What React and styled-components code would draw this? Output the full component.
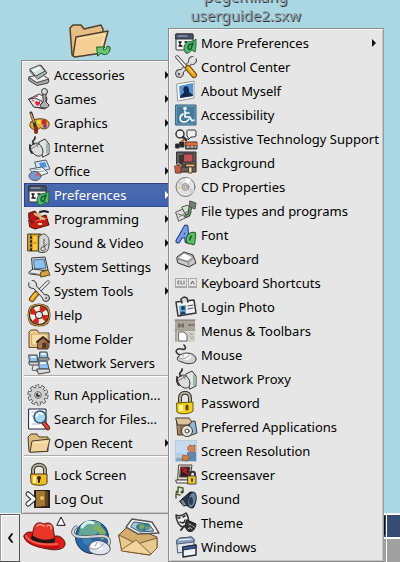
import React from 'react';
import styled, { createGlobalStyle } from 'styled-components';

const GlobalStyle = createGlobalStyle`
  * { box-sizing: border-box; }
  body { margin: 0; background: #abd7e3; font-family: "Noto Sans", "Open Sans", sans-serif; font-size: 13px; color: #000; }
  button { font: inherit; color: inherit; }
`;

const Desktop = styled.div`
  position: relative;
  display: flex;
  flex-direction: column;
  justify-content: flex-end;
  min-height: 100vh;
  overflow: hidden;
`;

const FolderShortcut = styled.button`
  position: absolute;
  left: 68px;
  top: 22px;
  padding: 0;
  border: 0;
  background: none;
  line-height: 0;
`;

const FileLabel = styled.div`
  position: absolute;
  left: 168px;
  top: -13px;
  width: 155px;
  text-align: center;
  font-size: 15px;
  line-height: 19px;
  color: #94a3a9;
  text-shadow: 1px 1px 0 #30383c;
`;

const Menu = styled.nav`
  position: absolute;
  left: ${p => (p.$sub ? 168 : 21)}px;
  bottom: ${p => (p.$sub ? 0 : 48)}px;
  width: ${p => (p.$sub ? 216 : 156)}px;
  padding: 2px;
  background: #e6e6e6;
  border: 1px solid #8c8c8c;
  border-right-color: #999;
  box-shadow: inset 1px 1px 0 #f6f6f6, inset -1px -1px 0 #c6c6c6;
`;

const MenuItem = styled.button`
  display: flex;
  align-items: center;
  gap: 4px;
  width: 100%;
  height: 24px;
  padding: 0 4px;
  border: 0;
  text-align: left;
  white-space: nowrap;
  color: ${p => (p.$active ? '#fff' : '#000')};
  background: ${p => (p.$active ? 'linear-gradient(#4a69ae, #4666b0 60%, #3f5fae)' : 'transparent')};
  box-shadow: ${p => (p.$active ? 'inset 0 1px 0 #2f447c, inset 1px 0 0 #2f447c, inset 0 -1px 0 #35509a' : 'none')};
`;

const MenuLabel = styled.span`
  flex: 1;
  line-height: 20px;
`;

const Separator = styled.hr`
  height: 2px;
  margin: 0 0 6px;
  border: 0;
  border-top: 1px solid #ababab;
  border-bottom: 1px solid #fff;
`;

const Icon = styled.svg`
  flex: none;
  width: ${p => p.$w || 22}px;
  height: ${p => p.$h || p.$w || 22}px;
  overflow: visible;
  stroke-linejoin: round;
  stroke-linecap: round;
`;

const Panel = styled.footer`
  display: flex;
  height: 49px;
  background: #e6e6e6;
  border-top: 1px solid #f4f4f4;
`;

const HideButton = styled.button`
  display: grid;
  place-items: center;
  width: 20px;
  padding: 0;
  background: #e8e8e8;
  border: 1px solid #555;
  border-left-color: #999;
  box-shadow: inset 1px 1px 0 #fff;
`;

const Launchers = styled.div`
  display: flex;
  align-items: center;
  gap: 4px;
  flex: 1;
  padding-left: 2px;
`;

const Launcher = styled.button`
  display: grid;
  place-items: center;
  width: 44px;
  height: 46px;
  padding: 0;
  border: 0;
  background: none;
`;

const Pager = styled.div`
  display: grid;
  grid-template: 22px 1fr / 27px 13px;
  gap: 2px 1px;
  padding-top: 1px;
  background: #fff;
`;

const Workspace = styled.div`
  padding: 1px 1px 2px 0;
  background: ${p => (p.$current ? '#384b73' : '#a0a0a0')};
`;

const MiniWindow = styled.div`
  height: 19px;
  background: #e6e6e6;
  border: 1px solid #111;
`;

const K = '#333';

const art = {
  accessories: <g stroke="#444">
    <path d="M1 14l12-2 8 4-1 3-11 2.500-8-5z" fill="#aaa" /><path d="M1 13l12-3 8 5-12 3.500z" fill="#e8eceb" />
    <path d="M2 7l11-6 6 8-9 6z" fill="#a5b5af" /><path d="M2 5l10-4 5 6-9 5z" fill="#cfe3d8" /><path d="M4 6l7-3 2 2-7 3z" fill="#f5fff9" stroke="none" />
  </g>,
  games: <g stroke={K}>
    <path d="M1 11l10-5 8 4-2 11-10-2z" fill="#fff" /><path d="M1 11l6-1 7 3 1 7-9-1z" fill="#e9dcdc" />
    <path d="M8 13l2 1 2-1 0 3-3 2-2-3z" fill="#dc2638" stroke="none" /><path d="M4 12l2 1M6 9l4-1" stroke="#d34" />
    <path d="M15 5l3 0 0 9 3 3c0 4-9 4-9 0l3-3z" fill="#b0b0b0" /><circle cx="16.500" cy="3.500" r="3" fill="#ddd" />
  </g>,
  graphics: <g stroke="#5a3c14">
    <path d="M3 10c4-5 17-4 18 1 1 6-5 7-8 5-2-1-2 3-6 2-4-1-7-4-4-8z" fill="#e7ae3a" />
    <circle cx="16" cy="10" r="2.600" fill="#c52b20" stroke="none" /><circle cx="17" cy="14" r="2" fill="#7b3ea3" stroke="none" /><circle cx="11" cy="10" r="2" fill="#e9dd34" stroke="none" /><circle cx="7" cy="14" r="2" fill="#5a9a35" stroke="none" />
    <path d="M3 1l3 9 2 7" fill="none" stroke="#333" strokeWidth="3" /><path d="M3 2l3 8" stroke="#d9a252" strokeWidth="1.500" /><path d="M8 16l0 4" stroke="#8e2c17" strokeWidth="4" />
  </g>,
  internet: <g stroke={K}>
    <path d="M11 6l6-3 4 5v10l-6 3z" fill="#dce7e1" /><path d="M18 6l3 3v8l-3 1z" fill="#9fb5ab" stroke="none" />
    <path d="M4 9c5-5 10 0 11 6 0 7-7 6-10 2S1 12 4 9z" fill="#ddd" /><path d="M3 13l8-5M8 7l2 4" fill="none" stroke="#777" /><path d="M6 8C2 5 8 4 7 1M2 9c0 3-1 5 2 8" fill="none" strokeWidth="1.800" />
  </g>,
  office: <g stroke="#4b5d6b">
    <path d="M7 2l11-2 4 9-12 3z" fill="#cfe2f7" /><path d="M11 3l6-1 2 5-6 1z" fill="#5193dd" stroke="none" />
    <path d="M2 9l12-2 6 6-11 4z" fill="#fff" /><path d="M5 10l8-1M7 12l9-1" stroke="#8ab" /><ellipse cx="7" cy="16" rx="6" ry="4.500" fill="#7799d0" /><path d="M7 16l6-1-3-3z" fill="#d35545" stroke="none" />
  </g>,
  preferences: <g stroke="#333">
    <rect x="1" y="2" width="17" height="16" rx="1" fill="#f5f5f5" /><path d="M1 2h17v5H1z" fill="#46536e" /><path d="M3 4h9" stroke="#aeb9ce" />
    <path d="M4 10h2M4 14h3M5 10v4M10 10h2" stroke="#111" strokeWidth="1.500" />
    <path d="M11 21c-3-2-3-9 2-11 3-1 5 0 8-3 0 5 0 10-1 13l-3-2c-2 2-4 4-6 3z" fill="#50b86a" stroke="#226337" /><path d="M17 12c-5 0-5 7-1 5l2-6" fill="none" stroke="#16592b" strokeWidth="1.500" />
  </g>,
  programming: <g stroke="#4b1510">
    <path d="M1 12l17-5 3 10-14 4-5-2z" fill="#c51c13" /><path d="M1 5l6-2 4 6-7 6-3-4z" fill="#b61812" /><path d="M7 13l13-3" stroke="#f36349" />
    <path d="M11 5l2 6M7 6l9 5" stroke="#d8b780" strokeWidth="2.400" /><path d="M12 4l4-1 4 1" fill="none" stroke="#222" strokeWidth="2" /><path d="M10 15h4v2h-4z" fill="#f3d4a0" stroke="none" />
  </g>,
  media: <g stroke="#54431e">
    <path d="M0 2h13v17H0z" fill="#dda120" /><path d="M3 2v17M11 2v17" stroke="#222" strokeWidth="2" strokeLinecap="butt" /><path d="M3 3v16M11 3v16" stroke="#fff2bf" strokeDasharray="1 3" /><path d="M5 4h4v6H5zM5 12h4v6H5z" fill="#ffc53e" stroke="none" />
    <path d="M11 5c5-7 11-1 10 7 0 7-3 10-10 8z" fill="#d6d6d0" stroke="#444" /><path d="M16 7v8c-4-1-4 4-1 4 3 0 3-3 1-4l3-3" fill="none" stroke="#555" />
  </g>,
  settings: <g stroke={K}>
    <path d="M4 2l13-1 3 13-15 1z" fill="#e0e5e7" /><path d="M6 4l10-1 2 9-11 1z" fill="#8cc2f0" stroke="#456b8d" /><path d="M1 16l4-3 15 2-2 5-16-2z" fill="#e6e6e6" /><path d="M3 17l12 2" stroke="#777" /><path d="M13 16l7-2 2 5-9 2z" fill="#d5a33a" stroke="#665020" />
  </g>,
  tools: <g>
    <path d="M20 2L8 14" stroke="#444" strokeWidth="3.500" /><path d="M20 2L8 14" stroke="#eee" strokeWidth="2" /><path d="M8 14l-4 5" stroke="#5c3b05" strokeWidth="6" /><path d="M8 14l-4 5" stroke="#eba823" strokeWidth="4" /><path d="M7 14l-3 4" stroke="#ffe277" />
    <path d="M6 6l11 12" stroke="#333" strokeWidth="4.500" /><circle cx="4.500" cy="4.500" r="4" fill="#ddd" stroke="#333" /><circle cx="18" cy="18" r="3.500" fill="#ccc" stroke="#333" /><path d="M6 6l11 12" stroke="#e0e0e0" strokeWidth="3" /><path d="M2 1l3 3" stroke="#e6e6e6" strokeWidth="3" /><circle cx="18" cy="18" r="1" fill="#555" />
  </g>,
  control: <g>
    <path d="M5 17L17 5" stroke="#333" strokeWidth="4.500" /><circle cx="17.500" cy="4.500" r="4" fill="#ddd" stroke="#333" /><circle cx="4.500" cy="17.500" r="4" fill="#ccc" stroke="#333" /><path d="M5 17L17 5" stroke="#ddd" strokeWidth="3" /><path d="M20 1l-3 3" stroke="#e6e6e6" strokeWidth="3" /><circle cx="4" cy="18" r="1.200" fill="#555" />
    <path d="M2 1l10 11" stroke="#333" strokeWidth="3.500" /><path d="M2 1l10 11" stroke="#eee" strokeWidth="2" /><path d="M13 12l6 7" stroke="#6d4608" strokeWidth="6" /><path d="M13 12l6 7" stroke="#efa81d" strokeWidth="4" /><path d="M14 12l4 5" stroke="#ffe17a" />
  </g>,
  help: <g>
    <path d="M3 3c4-3 12-3 16 0 3 4 3 12 0 16-4 3-12 3-16 0C0 15 0 7 3 3z" fill="none" stroke="#5f3b17" strokeWidth="2.500" /><path d="M3 3c4-3 12-3 16 0 3 4 3 12 0 16-4 3-12 3-16 0C0 15 0 7 3 3z" fill="none" stroke="#e1bd58" /><circle cx="11" cy="11" r="6.500" fill="none" stroke="#321" strokeWidth="7" /><circle cx="11" cy="11" r="6.500" fill="none" stroke="#f4eee5" strokeWidth="5" /><circle cx="11" cy="11" r="6.500" fill="none" stroke="#d42418" strokeWidth="5" strokeDasharray="5.100 5.100" strokeLinecap="butt" />
  </g>,
  home: <g stroke="#5b4323"><path d="M1 19V4l2-2h6l2 3h10v14z" fill="#f3d08d" /><path d="M4 6h15v11H4z" fill="#f9deaa" stroke="#d0a665" /><path d="M10 14l5-5 5 5v7H10z" fill="#a8754e" stroke="#4a3020" /><path d="M9 14l6-5 6 5" fill="none" stroke="#3b2a1e" strokeWidth="2" /><path d="M15 15h3v5h-3z" fill="#553219" /></g>,
  network: <g stroke="#444"><path d="M1 3h8l1 7H2zM12 0h7l1 6h-8zM10 9h9l2 8H12z" fill="#8bc1ec" /><path d="M1 10l10 0 0 3-9 0zM10 6h11v2H11zM9 17l12 0 1 3-11 2z" fill="#dadada" /><path d="M4 5h3M14 2h3M13 11h4" stroke="#e8f6ff" strokeWidth="2" /><path d="M5 14l-1 4 6 1" fill="none" stroke="#555" /></g>,
  gear: <g><circle cx="10" cy="11" r="8.500" fill="none" stroke="#444" strokeWidth="4" strokeDasharray="3.500 1.840" strokeLinecap="butt" /><circle cx="10" cy="11" r="8" fill="#cacac6" stroke="#555" /><circle cx="10" cy="11" r="8.500" fill="none" stroke="#ddd" strokeWidth="2.500" strokeDasharray="2.500 2.840" strokeDashoffset="-0.500" strokeLinecap="butt" /><circle cx="10" cy="11" r="6" fill="#d5d5d1" /><circle cx="10" cy="11" r="3.500" fill="#bbb" stroke="#777" /><circle cx="10" cy="11" r="2" fill="#333" /><circle cx="11" cy="10" r="1" fill="#eee" /></g>,
  search: <g><path d="M1 1h17v20H1z" fill="#fff" stroke="#172347" /><path d="M4 4h3M4 8h2M4 16h7" stroke="#aab7cf" /><path d="M15 14l5 6" stroke="#6b1814" strokeWidth="4.500" /><path d="M15 14l5 6" stroke="#de4b3f" strokeWidth="2.500" /><circle cx="12" cy="9" r="6" fill="#a6d8f2" stroke="#31526b" strokeWidth="1.500" /><path d="M9 8c0-3 3-4 5-2" fill="none" stroke="#fff" strokeWidth="2" /></g>,
  folder: <g stroke="#4a3a25"><path d="M1 19L0 5l3-3h6l2 3h9v14z" fill="#e0bb80" /><path d="M2 20L4 9l18-2-3 12z" fill="#f2d49d" /><path d="M5 11l14-1" stroke="#ffedc7" /></g>,
  lock: <g stroke="#493814"><path d="M5 11V6c0-7 12-7 12 0v5" fill="none" strokeWidth="4" /><path d="M5 11V6c0-7 12-7 12 0v5" fill="none" stroke="#aaa" strokeWidth="2" /><path d="M3 10h16v9c0 3-16 3-16 0z" fill="#f1bd20" /><path d="M5 12h3v7H5z" fill="#ffeb85" stroke="none" /><circle cx="11" cy="14" r="2" fill="#2d2511" stroke="none" /><path d="M11 14v4" stroke="#2d2511" strokeWidth="2" /></g>,
  password: <g stroke="#6a560e"><path d="M5 11V6c0-7 10-7 10 0v5" fill="none" stroke="#333" strokeWidth="4" /><path d="M5 11V6c0-7 10-7 10 0v5" fill="none" stroke="#b6b394" strokeWidth="2" /><path d="M2 11l16-1v9c-2 3-14 4-16 1z" fill="#f0d41c" /><path d="M4 13h4v6H4z" fill="#fff69a" stroke="none" /><path d="M12 14v3" stroke="#6b3c0d" strokeWidth="3" /></g>,
  logout: <g><path d="M6 2h16v18H6z" fill="#29221c" /><path d="M8 3h9v15l-9 1z" fill="#a37834" /><path d="M17 3l3 1v14h-3z" fill="#60451f" /><circle cx="14" cy="10" r="2" fill="#eec463" /><path d="M0 6l6 5-6 5" fill="none" stroke="#222" strokeWidth="5" /><path d="M0 6l6 5-6 5" fill="none" stroke="#fff" strokeWidth="3" /></g>,
  person: <g><path d="M2 4l17-3v17L3 21z" fill="#f8fafb" stroke="#999" /><path d="M4 6l14-3v13L5 18z" fill="#5792d7" /><path d="M5 18c0-4 4-4 4-6-3-7 6-8 5-1 0 3 4 2 4 5z" fill="#12294d" /></g>,
  access: <g><path d="M1 1h20v20H1z" fill="#447a9c" stroke="#315c78" /><path d="M2 2h18v18H2z" fill="none" stroke="#6f9fb9" /><circle cx="10" cy="4.500" r="1.800" fill="#fff" /><path d="M10 7v6h5l2 4 2-1M10 9h4M8 10c-4 2-4 8 1 8 3 0 4-1 5-3" fill="none" stroke="#fff" strokeWidth="1.600" /></g>,
  assist: <g stroke={K}><circle cx="5" cy="6" r="4" fill="#eef1f2" strokeWidth="1.500" /><path d="M8 9l3 3" strokeWidth="2.500" /><path d="M13 2h7l1 1v5l-2 1h-3l-3 3V9l-1-1V3z" fill="#eee" /><path d="M1 16h3v4H1zM5 14h4v5H5z" fill="#252525" /><path d="M7 13l2-1" stroke="#d55b30" strokeWidth="2" /><path d="M11 14h11v7H11z" fill="#555" /><path d="M12 16h9" stroke="#e56a34" strokeWidth="3" /><path d="M12 19h2M16 19h2M20 19h1" stroke="#fff" /></g>,
  background: <g><path d="M2 0h19v20H2z" fill="#64605e" stroke="#292624" /><path d="M9 2h9v8H9z" fill="#c45356" stroke="#392a2a" /><path d="M4 3h4v9H4z" fill="#383637" /><path d="M5 12h12v4H5z" fill="#45474b" /><path d="M0 14l6-1v8H1z" fill="#c45d3d" stroke="#653228" /><path d="M1 14c0-3 5-3 5 0" fill="none" stroke="#d5c5b4" /><path d="M11 12h9v3h-9z" fill="#e1b770" stroke="#3d2a19" /><path d="M14 15h3v6h-3z" fill="#efdcad" stroke="#583e27" /></g>,
  cd: <g><circle cx="10.500" cy="11" r="9.500" fill="#e4e4df" stroke="#777" /><path d="M10 11L5 4l-2 4zM11 11l6 7 3-4z" fill="#d8ccd7" /><path d="M10 11L2 10v4z" fill="#dcdcab" /><path d="M11 11l5-8-5-1z" fill="#fafafa" /><circle cx="10.500" cy="11" r="3.500" fill="#ccc" stroke="#999" /><circle cx="10.500" cy="11" r="1.500" fill="#f8f8f8" stroke="#888" /></g>,
  filetypes: <g stroke="#555"><path d="M1 12l7-3 4 8-8 4z" fill="#dfe2dd" /><path d="M3 14l6 2M4 17l5-3" stroke="#777" /><path d="M7 7l6-2 3 5-6 3z" fill="#d1e1cf" /><path d="M11 16c7-1 1-8 6-10" fill="none" stroke="#333" strokeWidth="3.500" /><path d="M11 16c7-1 1-8 6-10" fill="none" stroke="#64a65d" strokeWidth="1.800" /><path d="M15 1l6 2-1 6-5-2z" fill="#708071" /></g>,
  font: <g><path d="M3 17L11 3l1 14M6 12h7" fill="none" stroke="#223b78" strokeWidth="5" /><path d="M3 17L11 3l1 14M6 12h7" fill="none" stroke="#779cef" strokeWidth="3" /><path d="M19 10c-7-1-8 10-3 8l3-7-1 8" fill="none" stroke="#205c2a" strokeWidth="4.500" /><path d="M19 10c-7-1-8 10-3 8l3-7-1 8" fill="none" stroke="#5dbf64" strokeWidth="2.500" /></g>,
  keyboard: <g stroke={K}><path d="M2 9l7-5 9 3 3 8-7 4-11-4z" fill="#c8c8c5" /><path d="M3 10l6-5 9 4-5 4z" fill="#fff" stroke="#999" /><path d="M3 11l10 3 6-4M13 14l1 5" fill="none" stroke="#888" /></g>,
  shortcuts: <g><path d="M0 6h12v10H0zM13 6h9v10h-9z" fill="#aaa" /><path d="M1 7h10v7H1zM14 7h7v7h-7z" fill="#e6e6e6" /><path d="M4 9H3v3h1M6 9v3h1M9 9v3" fill="none" stroke="#666" /><path d="M16 12l1.500-3 1.500 3" fill="none" stroke="#555" /></g>,
  badge: <g stroke="#333"><path d="M1 6l18-2 2 13-18 3z" fill="#eef4f7" strokeWidth="1.500" /><path d="M7 7l-1-4 3-2 3 1 1 4" fill="#ddd" strokeWidth="1.500" /><path d="M4 10l7-1v9l-6 1z" fill="#68a5cf" stroke="none" /><circle cx="8" cy="12" r="2" fill="#253d58" stroke="none" /><path d="M5 19c0-5 5-4 6-1z" fill="#253d58" stroke="none" /><path d="M13 10l5-1M13 13l5-1" stroke="#555" /></g>,
  toolbar: <g><path d="M0 0h20v22H0z" fill="#d2d0c7" /><path d="M0 0h20v9H0z" fill="#aaa69b" /><path d="M0 0h20M0 10h20" stroke="#77736a" /><path d="M4 4v3M6 5v1M8 4v3M14 5h2M18 5h1" stroke="#625e56" strokeWidth="1.500" /><path d="M1 11v10" stroke="#7a776e" /><path d="M4 12h5l3 3v6H4z" fill="#fff" stroke="#68655e" /><path d="M14 14h4M15 16l2 3 2-3" fill="none" stroke="#aaa69b" /></g>,
  mouse: <g stroke={K}><path d="M5 11C-2 8 2 4 6 5c4 1 6 0 3-4" fill="none" strokeWidth="1.600" /><path d="M3 13c4-6 16-5 18 1 1 6-8 7-14 4-4-1-6-2-4-5z" fill="#d4d4d4" /><path d="M5 12c5-4 10-2 12 1-3 4-8 4-12 1z" fill="#fafafa" stroke="none" /><path d="M8 9v4M4 14c5 2 8 0 10-3" fill="none" stroke="#999" /></g>,
  preferred: <g stroke="#44392d"><path d="M12 6l8-1 2 12-8 3z" fill="#8cb7dc" /><path d="M2 4h13l-1 15H3z" fill="#ad8059" /><path d="M1 2h13l3 4-4 3H3z" fill="#dbc29d" /><path d="M6 10v8" stroke="#7d5133" /><circle cx="12" cy="15" r="5.500" fill="#e3e7e6" /><circle cx="12" cy="15" r="2" fill="#fff" /></g>,
  resolution: <g><path d="M0 0h22v22H0z" fill="#b8cce0" /><path d="M1 1h20v12H1z" fill="#c5dbed" /><path d="M12 12h9v9h-9z" fill="#5c88b9" /><path d="M1 18h12v3H1z" fill="#86a8c7" /><path d="M11 18l-5-1 1-5 3 1 2-1 2 3-2 1z" fill="#cc8452" stroke="#a06139" transform="translate(1 3)" /><path d="M13 7l2-2 2 1 3-1v6l-3 2-4-3z" fill="#d08458" stroke="#a86a48" /></g>,
  screensaver: <g stroke="#4b4643"><path d="M4 1h13l-2 15H3z" fill="#f3ded4" /><path d="M6 3h9l-1 10H5z" fill="#311d21" /><path d="M7 4l5 2-4 1 5 3" fill="none" stroke="#b31e24" strokeWidth="2" /><path d="M1 16h12l1 3H2z" fill="#eee" /><path d="M15 13v-3c0-3 5-3 5 0v3" fill="none" stroke="#333" strokeWidth="2" /><path d="M13 12h8v8h-8z" fill="#efcb27" /><path d="M17 15v2" strokeWidth="2" /></g>,
  sound: <g><path d="M3 4V-1l5 1v4M1 10V6l4 1" fill="none" stroke="#53612a" strokeWidth="1.500" /><circle cx="2" cy="4" r="1.500" fill="#4b6127" /><circle cx="7" cy="4" r="1.500" fill="#3b4320" /><path d="M5 13l10-9c6-1 7 11 3 16l-8-3z" fill="#24384d" stroke="#111" /><ellipse cx="17" cy="12" rx="4" ry="8" transform="rotate(12 17 12)" fill="#6b879e" stroke="#1d2b3b" /><ellipse cx="16" cy="13" rx="2" ry="4" fill="#253d57" /><path d="M5 13l3-2 4 6-3 1z" fill="#789" stroke="#222" /></g>,
  theme: <g><path d="M1 3c4 2 7 0 10-2 4 6 3 12-2 14-5 0-8-7-8-12z" fill="#f4f4f4" stroke="#333" strokeWidth="1.500" /><path d="M3 6h2M8 5l2-1M5 10c3 2 5 0 5-2" fill="none" stroke="#222" strokeWidth="1.500" /><path d="M12 8l9 4c-1 5-3 9-8 7-3-3-4-6-1-11z" fill="#333" stroke="#111" /><path d="M14 12l2 1M18 14l1 1M13 17c2-3 4 0 4 0" fill="none" stroke="#ddd" /><path d="M9 14l-3 4" stroke="#333" strokeWidth="2" /></g>,
  windows: <g stroke="#505d73"><path d="M2 4l3-2 12-1 2 2v11L3 17z" fill="#dfe5eb" /><path d="M2 4l3-2 12-1 2 2v3L2 8z" fill="#8aa1c4" /><path d="M4 4l12-1" stroke="#fff" /><path d="M8 11l13-2v10l-13 2z" fill="#eff2f4" stroke="#202a3b" strokeWidth="1.500" /><path d="M8 11l13-2v3L8 14z" fill="#3e5e9c" stroke="#202a3b" /></g>,
};

const mainGroups = [
  [
    ['Accessories', 'accessories', true], ['Games', 'games', true], ['Graphics', 'graphics', true],
    ['Internet', 'internet', true], ['Office', 'office', true], ['Preferences', 'preferences', true],
    ['Programming', 'programming', true], ['Sound & Video', 'media', true], ['System Settings', 'settings', true],
    ['System Tools', 'tools', true], ['Help', 'help'], ['Home Folder', 'home'], ['Network Servers', 'network'],
  ],
  [['Run Application...', 'gear'], ['Search for Files...', 'search'], ['Open Recent', 'folder', true]],
  [['Lock Screen', 'lock'], ['Log Out', 'logout']],
];

const preferenceItems = [
  ['More Preferences', 'preferences', true], ['Control Center', 'control'], ['About Myself', 'person'],
  ['Accessibility', 'access'], ['Assistive Technology Support', 'assist'], ['Background', 'background'],
  ['CD Properties', 'cd'], ['File types and programs', 'filetypes'], ['Font', 'font'], ['Keyboard', 'keyboard'],
  ['Keyboard Shortcuts', 'shortcuts'], ['Login Photo', 'badge'], ['Menus & Toolbars', 'toolbar'], ['Mouse', 'mouse'],
  ['Network Proxy', 'internet'], ['Password', 'password'], ['Preferred Applications', 'preferred'],
  ['Screen Resolution', 'resolution'], ['Screensaver', 'screensaver'], ['Sound', 'sound'], ['Theme', 'theme'],
  ['Windows', 'windows'],
];

function Entry({ item: [label, icon, hasSubmenu], active }) {
  return (
    <MenuItem type="button" $active={active} aria-haspopup={hasSubmenu ? 'menu' : undefined}>
      <Icon viewBox="0 0 22 22" aria-hidden="true">{art[icon]}</Icon>
      <MenuLabel>{label}</MenuLabel>
      {hasSubmenu && (
        <Icon $w={6} $h={8} viewBox="0 0 6 8" aria-hidden="true"><path d="M1 0l4 4-4 4z" fill={active ? '#fff' : '#111'} /></Icon>
      )}
    </MenuItem>
  );
}

function RedHat() {
  return (
    <Icon $w={44} $h={40} viewBox="0 0 44 40" aria-hidden="true">
      <path d="M2 18c1-4 6-5 10-3l19 4c5-3 11 1 12 6 1 6-8 8-17 6C14 29 2 25 2 18z" fill="#df1d18" stroke="#541313" />
      <path d="M10 20c1-6 1-11 4-14 3-2 6-1 8 0 4-2 8-1 9 3l2 13c-5 5-18 3-23-2z" fill="#ea3428" stroke="#651414" />
      <path d="M10 17c6 5 15 6 22 3l1 4c-6 4-19 3-24-3z" fill="#231715" />
      <path d="M15 8c2-3 5-1 7 0M25 8c3-2 5 0 4 3" fill="none" stroke="#ff9b84" strokeWidth="1.500" />
      <path d="M4 18c4 7 16 9 31 8" fill="none" stroke="#ff594a" strokeWidth="2" />
      <path d="M5 23c7 6 19 8 31 6" fill="none" stroke="#a70e0e" strokeWidth="1.500" />
      <path d="M35 7l4-8 4 8z" fill="#fff" stroke="#111" />
    </Icon>
  );
}

function Globe() {
  return (
    <Icon $w={42} $h={42} viewBox="0 0 42 42" aria-hidden="true">
      <circle cx="21" cy="20" r="16.500" fill="#2867aa" stroke="#1a334b" />
      <path d="M9 11C14 2 26 2 31 7l-5 3 2 5-8 6-7-2-6 2z" fill="#62a894" /><path d="M21 11l7-4 7 8-3 8-5-3 1-5z" fill="#83b35e" /><path d="M11 22l6-2 5 4-3 5-6-2z" fill="#3980b8" />
      <path d="M11 10c3-4 7-6 11-4" fill="none" stroke="#d5f1ed" strokeWidth="3" />
      <path d="M5 10C-1 15 2 20 12 20c11 0 23-4 26 3 1 4-2 7-6 9" fill="none" stroke="#555f66" strokeWidth="3.500" />
      <path d="M5 10C-1 15 2 20 12 20c11 0 23-4 26 3 1 4-2 7-6 9" fill="none" stroke="#cbd4d9" strokeWidth="2" />
      <path d="M19 27c5-6 15-4 20 3 2 7-10 10-18 6-4-2-4-6-2-9z" fill="#e2e5ef" stroke="#42485a" />
      <path d="M20 28c5-4 10-1 12 3-4 3-8 3-12 0z" fill="#fff" /><path d="M18 31c7 3 12 0 14-4M24 29l2-3" fill="none" stroke="#8990a3" />
    </Icon>
  );
}

function Mail() {
  return (
    <Icon $w={44} $h={42} viewBox="0 0 44 42" aria-hidden="true">
      <path d="M1 18l10-10 28 12v10l-8 8-26-4z" fill="#d5ad6a" stroke="#604626" />
      <path d="M1 18l18 9 20-6v10l-7 7-28-4z" fill="#e9c98b" stroke="#795c33" />
      <path d="M3 33l15-10 15 14" fill="#f2d59c" stroke="#86683e" />
      <path d="M14 2l20 3 7 11-21 1-12-7z" fill="#f5f5f0" stroke="#555" strokeWidth="1.500" strokeDasharray="2 1" />
      <path d="M16 5l15 2 5 7-14 1-9-5z" fill="#a8c6d1" stroke="#365c6b" />
      <ellipse cx="25" cy="10" rx="7" ry="4" fill="#347b94" /><path d="M21 8l4-1 2 2-3 4-3-2zM28 9l3 1-2 3-2-2z" fill="#78a867" />
    </Icon>
  );
}

export default function App() {
  return (
    <>
      <GlobalStyle />
      <Desktop>
        <FileLabel>pegemilang<br />userguide2.sxw</FileLabel>
        <FolderShortcut type="button" aria-label="Folder">
          <Icon $w={44} $h={38} viewBox="0 0 44 38" aria-hidden="true">
            <path d="M4 33L2 6l3-3h8l3 4 17-4 2 4 0 22z" fill="#e6bd82" stroke="#51412b" strokeWidth="1.500" />
            <path d="M5 34l3-19 32-6-6 22-27 4z" fill="#f5ce93" stroke="#4d402e" strokeWidth="1.500" /><path d="M10 17l27-5-4 15" fill="none" stroke="#ffe4b5" />
            <path d="M29 25h8l-2 2c2 2 4 0 4-3l3 1c1 6-5 10-9 6l-3 3z" fill="#67c76f" stroke="#22572b" />
          </Icon>
        </FolderShortcut>

        <Panel>
          <HideButton type="button" aria-label="Hide panel">
            <Icon $w={6} $h={10} viewBox="0 0 6 10" aria-hidden="true"><path d="M5 1L2 5l3 4" fill="none" stroke="#111" strokeWidth="2" /></Icon>
          </HideButton>
          <Launchers>
            <Launcher type="button" aria-label="Main menu"><RedHat /></Launcher>
            <Launcher type="button" aria-label="Web browser"><Globe /></Launcher>
            <Launcher type="button" aria-label="Email"><Mail /></Launcher>
          </Launchers>
          <Pager>
            <Workspace $current><MiniWindow /></Workspace>
            <Workspace $current />
            <Workspace />
            <Workspace />
          </Pager>
        </Panel>

        <Menu aria-label="Main menu">
          {mainGroups.map((group, index) => (
            <React.Fragment key={index}>
              {index > 0 && <Separator />}
              {group.map(item => <Entry key={item[0]} item={item} active={item[0] === 'Preferences'} />)}
            </React.Fragment>
          ))}
        </Menu>
        <Menu $sub aria-label="Preferences">
          {preferenceItems.map(item => <Entry key={item[0]} item={item} />)}
        </Menu>
      </Desktop>
    </>
  );
}
